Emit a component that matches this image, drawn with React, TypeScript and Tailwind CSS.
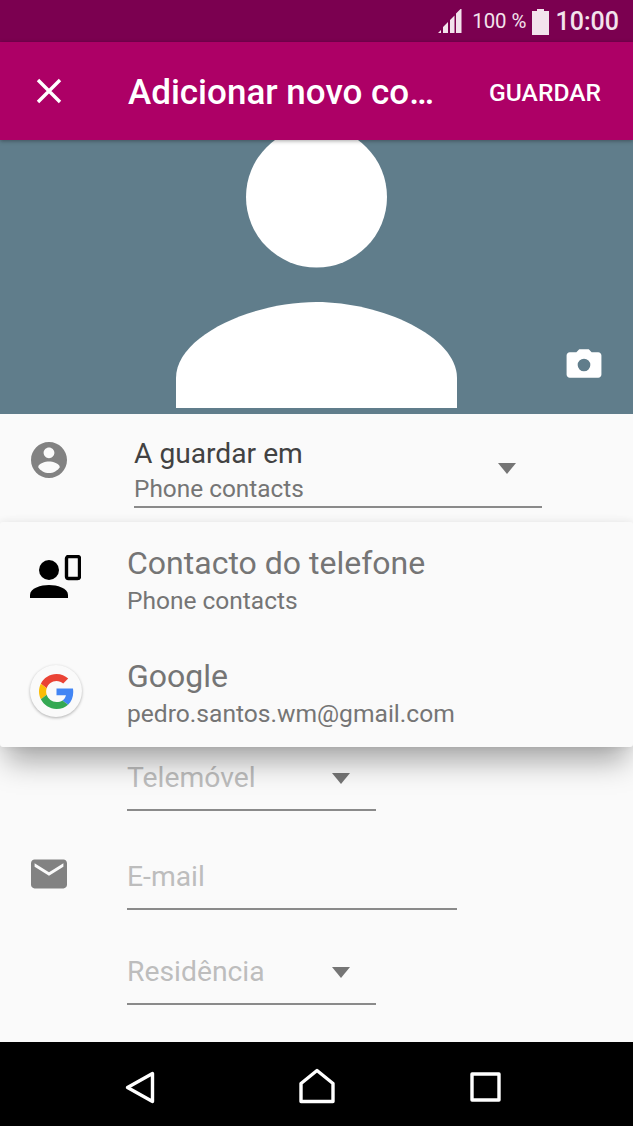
const Caret = () => (
  <svg width="18" height="11" viewBox="0 0 18 11" className="shrink-0">
    <path d="M0 0h18l-9 11z" fill="#757575" />
  </svg>
);

const Field = ({
  label,
  width,
  caret,
  height,
  icon,
}: {
  label: string;
  width: string;
  caret?: boolean;
  height: string;
  icon?: React.ReactNode;
}) => (
  <div className={`flex items-end pl-[31px] ${height}`}>
    <div className="w-[96px] h-[64px] shrink-0 flex items-start">{icon}</div>
    <div
      className={`${width} h-[64px] flex items-center justify-between pr-[26px] border-b-2 border-[#8a8a8a] text-[28.3px] text-[#bdbdbd]`}
    >
      <span>{label}</span>
      {caret && <Caret />}
    </div>
  </div>
);

const GoogleLogo = () => (
  <svg width="35" height="35" viewBox="0 0 48 48">
    <path fill="#EA4335" d="M24 9.5c3.54 0 6.71 1.22 9.21 3.6l6.85-6.85C35.9 2.38 30.47 0 24 0 14.62 0 6.51 5.38 2.56 13.22l7.98 6.19C12.43 13.72 17.74 9.5 24 9.5z" />
    <path fill="#4285F4" d="M46.98 24.55c0-1.57-.15-3.09-.38-4.55H24v9.02h12.94c-.58 2.96-2.26 5.48-4.78 7.18l7.73 6c4.51-4.18 7.09-10.36 7.09-17.65z" />
    <path fill="#FBBC05" d="M10.53 28.59c-.48-1.45-.76-2.99-.76-4.59s.27-3.14.76-4.59l-7.98-6.19C.92 16.46 0 20.12 0 24c0 3.88.92 7.54 2.56 10.78l7.97-6.19z" />
    <path fill="#34A853" d="M24 48c6.48 0 11.93-2.13 15.89-5.81l-7.73-6c-2.15 1.45-4.92 2.3-8.16 2.3-6.26 0-11.57-4.22-13.47-9.91l-7.98 6.19C6.51 42.62 14.62 48 24 48z" />
  </svg>
);

export default function App() {
  return (
    <div className="w-[633px] h-[1126px] flex flex-col overflow-hidden bg-[#fafafa] font-['Roboto',sans-serif]">
      {/* status bar */}
      <div className="h-[42px] shrink-0 bg-[#7b0050] flex items-center justify-end pr-[14px] pt-[1px] text-[#f3e3ec]">
        <svg width="26" height="26" viewBox="0 0 26 26" className="mr-[9px]" fill="currentColor">
          <path d="M1 24l3-3v3zM6 24v-6l5-5v11zM13 24V11l4.5-4.5V24zM19 24V4.5L24.500 -1V24z" />
        </svg>
        <span className="text-[20.4px] mr-[5px]">100 %</span>
        <svg width="17" height="26" viewBox="0 0 17 26" className="mr-[7px]" fill="currentColor">
          <path d="M5 0h7v2h5v24H0V2h5z" />
        </svg>
        <span className="text-[25px] font-medium">10:00</span>
      </div>

      {/* toolbar */}
      <div className="h-[98px] shrink-0 bg-[#ad0066] flex items-center text-white relative z-10 shadow-[0_1px_4px_rgba(0,0,0,0.35)]">
        <svg width="26" height="26" viewBox="0 0 26 26" className="ml-[36px] mr-[66px]" stroke="white" strokeWidth="3.4" fill="none">
          <path d="M2 2l22 22M24 2L2 24" />
        </svg>
        <span className="text-[35px] font-medium flex-1 whitespace-nowrap pt-[4px]">Adicionar novo co…</span>
        <span className="text-[24.6px] font-medium mr-[32px] pt-[4px]">GUARDAR</span>
      </div>

      {/* photo */}
      <div className="h-[274px] shrink-0 bg-[#607d8b] relative flex justify-center overflow-hidden">
        <svg width="281" height="268" viewBox="176 140 281 268" fill="white">
          <circle cx="316.5" cy="197" r="70.5" />
          <path d="M176 408v-30c0-42 76-76 140.5-76S457 336 457 378v30z" />
        </svg>
        <svg width="38" height="38" viewBox="0 0 24 24" fill="white" fillRule="evenodd" className="absolute left-[565px] top-[206px]">
          <path d="M9 2L7.17 4H3c-1.1 0-2 .9-2 2v12c0 1.1.9 2 2 2h18c1.1 0 2-.9 2-2V6c0-1.1-.9-2-2-2h-4.17L15 2H9zm3 6a4 4 0 1 1 0 8 4 4 0 0 1 0-8z" />
        </svg>
      </div>

      {/* form */}
      <div className="flex-1 relative flex flex-col">
        <div className="h-[95px] flex pl-[31px] pt-[28px]">
          <svg width="36" height="36" viewBox="2 2 20 20" fill="#828282" className="shrink-0">
            <path d="M12 2C6.48 2 2 6.48 2 12s4.48 10 10 10 10-4.48 10-10S17.52 2 12 2zm0 3c1.66 0 3 1.34 3 3s-1.34 3-3 3-3-1.34-3-3 1.34-3 3-3zm0 14.2c-2.5 0-4.71-1.28-6-3.22.03-1.99 4-3.08 6-3.08 1.99 0 5.97 1.09 6 3.08-1.29 1.94-3.5 3.22-6 3.22z" />
          </svg>
          <div className="ml-[67px] w-[408px] h-[72px] mt-[-6px] flex items-start border-b-2 border-[#8a8a8a]">
            <div className="flex flex-col">
              <span className="text-[28.2px] leading-[35px] text-[#424242]">A guardar em</span>
              <span className="text-[24.4px] leading-[35px] text-[#757575]">Phone contacts</span>
            </div>
          </div>
        </div>

        {/* rows under the picker */}
        <div className="h-[206px]" />
        <Field label="Telemóvel" width="w-[249px]" height="h-[96px]" caret />
        <Field
          label="E-mail"
          width="w-[330px]"
          height="h-[99px]"
          icon={
            <svg width="36" height="36" viewBox="2 2 20 20" fill="#828282" className="mt-[10px]">
              <path d="M20 4H4c-1.1 0-1.99.9-1.99 2L2 18c0 1.1.9 2 2 2h16c1.1 0 2-.9 2-2V6c0-1.1-.9-2-2-2zm0 4l-8 5-8-5V6l8 5 8-5v2z" />
            </svg>
          }
        />
        <Field label="Residência" width="w-[249px]" height="h-[95px]" caret />

        {/* account picker */}
        <div className="absolute left-0 top-[108px] w-full h-[225px] bg-[#fafafa] rounded-[3px] shadow-[0_20px_28px_-6px_rgba(0,0,0,0.34),0_0_8px_rgba(0,0,0,0.08)]">
          <div className="h-[113px] flex items-center pl-[30px]">
            <svg width="51" height="44" viewBox="0 0 51 44" className="shrink-0 mr-[46px] mb-[3px]">
              <circle cx="19" cy="15" r="10" fill="black" />
              <path d="M0 43v-3c0-7 11-10 19-10s19 3 19 10v3z" fill="black" />
              <rect x="36.5" y="1.5" width="13" height="22" rx="2" fill="none" stroke="black" strokeWidth="3.4" />
            </svg>
            <div className="flex flex-col pt-[5px]">
              <span className="text-[32px] leading-[38px] text-[#757575]">Contacto do telefone</span>
              <span className="text-[24.5px] leading-[35px] mt-[1px] text-[#757575]">Phone contacts</span>
            </div>
          </div>
          <div className="h-[112px] flex items-center pl-[30px]">
            <div className="w-[52px] h-[52px] rounded-full bg-[#fafafa] shadow-[0_1px_3px_rgba(0,0,0,0.3)] flex items-center justify-center shrink-0 mr-[45px]">
              <GoogleLogo />
            </div>
            <div className="flex flex-col pt-[5px]">
              <span className="text-[32px] leading-[38px] text-[#757575]">Google</span>
              <span className="text-[24.6px] leading-[35px] mt-[1px] text-[#757575]">pedro.santos.wm@gmail.com</span>
            </div>
          </div>
        </div>

        <svg width="18" height="11" viewBox="0 0 18 11" className="absolute left-[498px] top-[49px]">
          <path d="M0 0h18l-9 11z" fill="#757575" />
        </svg>
      </div>

      {/* nav bar */}
      <div className="h-[84px] shrink-0 bg-black flex items-center">
        <svg width="633" height="84" viewBox="0 1042 633 84" fill="none" stroke="white" strokeWidth="3.4" strokeLinejoin="round">
          <path d="M152.5 1073.5v28l-25-14z" />
          <path d="M301 1101.5v-18l16-13 16 13v18z" />
          <rect x="472" y="1074" width="27" height="26" />
        </svg>
      </div>
    </div>
  );
}
